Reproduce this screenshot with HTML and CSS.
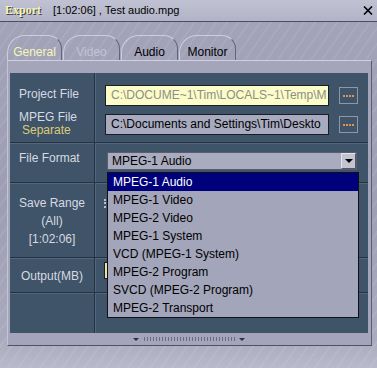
FILE: index.html
```html
<!DOCTYPE html>
<html lang="en">

<head>
    <meta charset="UTF-8" />
    <meta name="viewport" content="width=device-width, initial-scale=1.0" />
    <title>Export</title>
    <link rel="stylesheet" href="styles.css">
</head>

<body>
    <div class="window">
        <div class="titlebar">
            <span class="title-app">Export</span>
            <span class="title-text">[1:02:06] , Test audio.mpg</span>
            <svg class="title-close" width="10" height="9" viewBox="0 0 10 9">
                <path d="M1 0.5 L9 8.5 M9 0.5 L1 8.5" stroke="#000" stroke-width="1.6" fill="none" />
            </svg>
        </div>

        <div class="tabs">
            <div class="tab tab-active">General</div>
            <div class="tab tab-disabled">Video</div>
            <div class="tab">Audio</div>
            <div class="tab">Monitor</div>
        </div>

        <div class="frame">
            <div class="sheet">
                <div class="row row-files">
                    <div class="label-cell">
                        <div class="label">Project File</div>
                        <div class="label label-mpeg">MPEG File</div>
                        <div class="label label-sub">Separate</div>
                    </div>
                    <div class="field-cell">
                        <div class="file-line">
                            <div class="path path-project">C:\DOCUME~1\Tim\LOCALS~1\Temp\M</div>
                            <div class="browse"><span class="browse-dots"></span></div>
                        </div>
                        <div class="file-line">
                            <div class="path">C:\Documents and Settings\Tim\Deskto</div>
                            <div class="browse"><span class="browse-dots"></span></div>
                        </div>
                    </div>
                </div>

                <div class="row row-format">
                    <div class="label-cell">
                        <div class="label">File Format</div>
                    </div>
                    <div class="field-cell">
                        <div class="combo">
                            <span class="combo-text">MPEG-1 Audio</span>
                            <span class="combo-button"><span class="combo-arrow"></span></span>
                        </div>
                    </div>
                </div>

                <div class="row row-range">
                    <div class="label-cell">
                        <div class="label">Save Range</div>
                        <div class="label">(All)</div>
                        <div class="label">[1:02:06]</div>
                    </div>
                    <div class="field-cell">
                        <span class="range-mark"></span>
                    </div>
                </div>

                <div class="row row-output">
                    <div class="label-cell">
                        <div class="label">Output(MB)</div>
                    </div>
                    <div class="field-cell">
                        <div class="output-box"></div>
                    </div>
                </div>

                <div class="row row-empty">
                    <div class="label-cell"></div>
                    <div class="field-cell"></div>
                </div>
            </div>
            <div class="frame-foot">
                <span class="foot-arrow"></span>
                <span class="foot-dots"></span>
                <span class="foot-arrow"></span>
            </div>
        </div>

        <ul class="format-list">
            <li class="format-item format-item-selected">MPEG-1 Audio</li>
            <li class="format-item">MPEG-1 Video</li>
            <li class="format-item">MPEG-2 Video</li>
            <li class="format-item">MPEG-1 System</li>
            <li class="format-item">VCD (MPEG-1 System)</li>
            <li class="format-item">MPEG-2 Program</li>
            <li class="format-item">SVCD (MPEG-2 Program)</li>
            <li class="format-item">MPEG-2 Transport</li>
        </ul>
    </div>
</body>

</html>
```

FILE: styles.css
```css
* {
    margin: 0;
    padding: 0;
    box-sizing: border-box;
}

body {
    width: 377px;
    height: 368px;
    overflow: hidden;
    font-family: "Liberation Sans", Arial, sans-serif;
    font-size: 12px;
}

.window {
    position: relative;
    width: 377px;
    height: 368px;
    background:
        repeating-linear-gradient(125deg, rgba(255, 255, 255, 0.07) 0 2px, rgba(0, 0, 0, 0) 2px 9px),
        linear-gradient(180deg, #a3a4b9 0, #9d9eb4 55%, #a9aabd 92%, #b8b9c9 100%);
}

/* title bar */

.titlebar {
    display: flex;
    align-items: center;
    height: 22px;
    padding-bottom: 1px;
    border-bottom: 1px solid #4c4d60;
    background: linear-gradient(180deg, #c0c1d2 0, #b2b3c6 100%);
}

.title-app {
    padding-left: 5px;
    font-family: "Liberation Serif", "Times New Roman", serif;
    font-weight: bold;
    font-size: 12px;
    color: #f6f4b4;
    text-shadow: 1px 1px 0 #3a3b4c;
}

.title-text {
    margin-left: 12px;
    font-size: 11px;
    color: #000;
}

.title-close {
    margin-left: auto;
    margin-right: 4px;
}

/* tabs */

.tabs {
    display: flex;
    gap: 1px;
    height: 25px;
    margin-top: 13px;
    padding-left: 7px;
}

.tab {
    width: 57px;
    height: 25px;
    padding-top: 9px;
    line-height: 14px;
    text-align: center;
    color: #000;
    border: 1px solid;
    border-color: #cdcedd #63647b transparent #cdcedd;
    border-bottom: none;
    border-radius: 18px 14px 0 0;
}

.tab-active {
    width: 55px;
    color: #f6f6b6;
}

.tab-disabled {
    color: #c2c4d2;
}

/* frame around the sheet */

.frame {
    width: 365px;
    margin-left: 7px;
    padding: 12px 3px 0 2px;
    border-top: 1px solid #d0d1de;
    border-left: 1px solid #c4c5d4;
    border-right: 1px solid #5c5d73;
    border-bottom: 1px solid #505166;
    background: #a4a5ba;
}

.sheet {
    height: 260px;
    background: #3f5468;
}

.row {
    display: grid;
    grid-template-columns: 85px 1fr;
    border-bottom: 1px solid #233343;
    box-shadow: inset 0 1px 0 #54687b;
}

.row:first-child {
    box-shadow: none;
}

.row-files {
    height: 70px;
}

.row-format {
    height: 40px;
}

.row-range {
    height: 75px;
}

.row-output {
    height: 35px;
}

.row-empty {
    height: 40px;
    border-bottom: none;
}

.label-cell {
    border-right: 1px solid #223242;
}

.field-cell {
    box-shadow: inset 1px 0 0 #54687b;
}

.label {
    line-height: 14px;
    color: #d6dae2;
    white-space: nowrap;
}

.row-files .label-cell {
    padding: 14px 0 0 9px;
}

.label-mpeg {
    margin-top: 10px;
    line-height: 13px;
}

.label-sub {
    padding-left: 3px;
    line-height: 13px;
    color: #dccb76;
}

.row-files .field-cell {
    display: flex;
    flex-direction: column;
    gap: 8px;
    padding: 12px 0 0 10px;
}

.file-line {
    display: flex;
    align-items: center;
    gap: 10px;
}

.path {
    width: 224px;
    height: 21px;
    padding: 0 4px 0 5px;
    line-height: 19px;
    white-space: nowrap;
    overflow: hidden;
    color: #000;
    background: #a8aabf;
    border: 1px solid #1c1c24;
}

.path-project {
    color: #8e8e86;
    background: #fcfcc9;
}

.browse {
    display: flex;
    align-items: center;
    justify-content: center;
    width: 19px;
    height: 17px;
    border: 1px solid #8a98aa;
}

.browse-dots {
    width: 11px;
    height: 2px;
    background: repeating-linear-gradient(90deg, #e4934f 0 2px, rgba(0, 0, 0, 0) 2px 3px);
}

.row-format .label-cell {
    padding: 8px 0 0 9px;
}

.row-format .field-cell {
    padding: 9px 0 0 12px;
}

.combo {
    display: flex;
    align-items: center;
    width: 250px;
    height: 18px;
    background: #a9abbe;
    border: 1px solid #5a5c70;
}

.combo-text {
    padding-left: 4px;
    line-height: 16px;
    color: #000;
}

.combo-button {
    display: flex;
    align-items: center;
    justify-content: center;
    width: 15px;
    height: 16px;
    margin-left: auto;
    background: #c3c4cf;
    border: 1px solid;
    border-color: #e4e5ec #55566a #55566a #e4e5ec;
}

.combo-arrow {
    border-top: 4px solid #000;
    border-left: 4px solid transparent;
    border-right: 4px solid transparent;
}

.row-range .label-cell {
    padding-top: 11px;
    text-align: center;
}

.row-range .label-cell .label {
    line-height: 18px;
}

.row-range .field-cell {
    padding: 16px 0 0 9px;
}

.range-mark {
    display: block;
    width: 2px;
    height: 9px;
    border-left: 2px dotted #b8c0cc;
}

.row-output .label-cell {
    padding-top: 11px;
    text-align: center;
}

.row-output .field-cell {
    padding: 4px 0 0 9px;
}

.output-box {
    width: 230px;
    height: 17px;
    background: #e8e4a4;
    border: 1px solid #1c1c24;
}

.frame-foot {
    display: flex;
    align-items: center;
    justify-content: center;
    gap: 4px;
    height: 12px;
}

.foot-arrow {
    border-top: 3px solid #2e2f3e;
    border-left: 3px solid transparent;
    border-right: 3px solid transparent;
}

.foot-dots {
    width: 92px;
    height: 4px;
    background-image: radial-gradient(circle, #6a6b80 0.6px, rgba(0, 0, 0, 0) 0.9px);
    background-size: 3px 2px;
}

/* open drop-down of the File Format combo */

.format-list {
    position: absolute;
    left: 107px;
    top: 172px;
    width: 252px;
    height: 146px;
    list-style: none;
    background: #a3a5ba;
    border: 1px solid #101018;
}

.format-item {
    height: 18px;
    padding-left: 5px;
    line-height: 18px;
    color: #000;
    white-space: nowrap;
}

.format-item-selected {
    color: #fff;
    background: #00007c;
}
```
